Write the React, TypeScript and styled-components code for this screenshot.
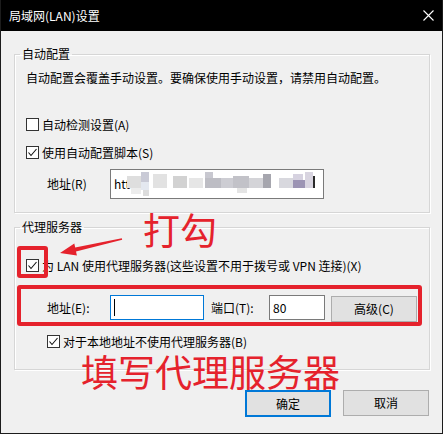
import styled, { createGlobalStyle } from "styled-components";

const GlobalStyle = createGlobalStyle`
  html, body {
    margin: 0;
    padding: 0;
    background: #f0f0f0;
  }
  body {
    font-family: "Noto Sans CJK SC", "Noto Sans", sans-serif;
    font-size: 12px;
    line-height: 16px;
    color: #000;
  }
`;

const RED = "#e5222c";

const mosaic = [
  { x: 0, y: 4, w: 14, h: 12, c: "#dedede" },
  { x: 4, y: 16, w: 10, h: 6, c: "#ececec" },
  { x: 14, y: 0, w: 8, h: 10, c: "#c9cad6" },
  { x: 14, y: 10, w: 8, h: 8, c: "#e4e8f0" },
  { x: 16, y: 18, w: 6, h: 6, c: "#dcdcdc" },
  { x: 26, y: 2, w: 14, h: 14, c: "#e2e2e2" },
  { x: 46, y: 4, w: 14, h: 12, c: "#d2d2d2" },
  { x: 62, y: 6, w: 14, h: 10, c: "#e6e6e6" },
  { x: 78, y: 0, w: 8, h: 6, c: "#c8c8d0" },
  { x: 78, y: 6, w: 16, h: 10, c: "#bdbdc4" },
  { x: 94, y: 6, w: 12, h: 10, c: "#cdcdd3" },
  { x: 106, y: 4, w: 16, h: 12, c: "#c2c2c8" },
  { x: 110, y: 16, w: 10, h: 5, c: "#e4e4e4" },
  { x: 122, y: 6, w: 14, h: 10, c: "#d4d4d8" },
  { x: 136, y: 2, w: 8, h: 14, c: "#a6a6ae" },
  { x: 152, y: 6, w: 14, h: 10, c: "#d8d8de" },
  { x: 166, y: 2, w: 10, h: 6, c: "#d6d2e0" },
  { x: 166, y: 8, w: 12, h: 8, c: "#9c94b4" },
  { x: 178, y: 0, w: 8, h: 16, c: "#d8d4e0" },
  { x: 186, y: 4, w: 2, h: 12, c: "#2a2a2a" },
];

const App = () => {
  return (
    <>
      <GlobalStyle />
      <Window>
        <TitleBar>
          <TitleText>局域网(LAN)设置</TitleText>
          <Close width="11" height="11" viewBox="0 0 11 11">
            <path d="M0.5 0.5 L10.5 10.5 M10.5 0.5 L0.5 10.5" stroke="#fff" strokeWidth="1.1" />
          </Close>
        </TitleBar>
        <Body>
          <Group $pb={13}>
            <Legend>自动配置</Legend>
            <GroupInner>
              <Desc>自动配置会覆盖手动设置。要确保使用手动设置，请禁用自动配置。</Desc>
              <CheckRow $top={32}>
                <Box />
                <span>自动检测设置(A)</span>
              </CheckRow>
              <CheckRow $top={15}>
                <Box>
                  <Tick />
                </Box>
                <span>使用自动配置脚本(S)</span>
              </CheckRow>
              <FieldRow $top={10}>
                <FieldLabel $w={63}>地址(R)</FieldLabel>
                <Input $w={214} $h={30}>
                  <span>htt</span>
                  <svg width="190" height="24" viewBox="0 0 190 24">
                    {mosaic.map((m, i) => (
                      <rect key={i} x={m.x} y={m.y} width={m.w} height={m.h} fill={m.c} />
                    ))}
                  </svg>
                </Input>
              </FieldRow>
            </GroupInner>
          </Group>

          <Group $pb={21} $mt={6}>
            <Legend>代理服务器</Legend>
            <GroupInner>
              <CheckRow $top={24}>
                <Box>
                  <Tick />
                </Box>
                <span>为 LAN 使用代理服务器(这些设置不用于拨号或 VPN 连接)(X)</span>
              </CheckRow>
              <ProxyRow>
                <FieldLabel $w={63}>地址(E):</FieldLabel>
                <Input $w={94} $h={25} $focus>
                  <Caret />
                </Input>
                <FieldLabel $w={58} $ml={7}>端口(T):</FieldLabel>
                <Input $w={56} $h={25}>
                  80
                </Input>
                <Button $w={86} $ml={6} $mt={1}>
                  高级(C)
                </Button>
              </ProxyRow>
              <CheckRow $top={15} $indent={21}>
                <Box>
                  <Tick />
                </Box>
                <span>对于本地地址不使用代理服务器(B)</span>
              </CheckRow>
            </GroupInner>
          </Group>

          <Footer>
            <Button $w={86} $primary>
              确定
            </Button>
            <Button $w={86}>取消</Button>
          </Footer>
        </Body>

        <MarkBox $x={17} $y={246} $w={31} $h={32} />
        <MarkBox $x={17} $y={285} $w={405} $h={41} />
        <Arrow width="70" height="26" viewBox="56 233 70 26">
          <polygon
            points="60,253 74.3,243.6 75.2,247.5 121.8,238.2 122.2,239.8 76.0,251.5 76.9,255.4"
            fill={RED}
          />
        </Arrow>
        <Note $x={143} $y={209}>打勾</Note>
        <Note $x={81} $y={351}>填写代理服务器</Note>
      </Window>
    </>
  );
};

const Tick = () => (
  <svg width="11" height="11" viewBox="0 0 11 11">
    <polyline points="1.5,5.5 4,8.5 9.5,2" fill="none" stroke="#111" strokeWidth="1.1" />
  </svg>
);

export default App;

const Window = styled.div`
  position: relative;
  width: 443px;
  height: 434px;
  box-sizing: border-box;
  background: #f0f0f0;
  border: 1px solid #1c1c1c;
  border-top: none;
  display: flex;
  flex-direction: column;
  overflow: hidden;
`;

const TitleBar = styled.div`
  height: 31px;
  flex-shrink: 0;
  background: #000;
  display: flex;
  align-items: center;
  justify-content: space-between;
  padding: 0 9px 0 8px;
  margin: 0 -1px;
  padding-left: 9px;
`;

const TitleText = styled.div`
  color: #fff;
  font-size: 12px;
  line-height: 16px;
`;

const Close = styled.svg`
  display: block;
`;

const Body = styled.div`
  display: flex;
  flex-direction: column;
  padding: 15px 12px 0 13px;
`;

const Group = styled.fieldset<{ $pb: number; $mt?: number }>`
  margin: ${({ $mt }) => $mt ?? 0}px 0 0 0;
  padding: 0 0 ${({ $pb }) => $pb}px 0;
  min-width: 0;
  border: 1px solid #d6d6d6;
  box-shadow: inset 1px 1px 0 #fff, 1px 1px 0 #fff;
`;

const Legend = styled.legend`
  margin-left: 5px;
  padding: 0 2px;
  line-height: 16px;
`;

const GroupInner = styled.div`
  display: flex;
  flex-direction: column;
  padding-left: 11px;
`;

const Desc = styled.div`
  margin-top: 8px;
  white-space: nowrap;
`;

const CheckRow = styled.div<{ $top: number; $indent?: number }>`
  display: flex;
  align-items: center;
  gap: 3px;
  height: 13px;
  margin-top: ${({ $top }) => $top}px;
  padding-left: ${({ $indent }) => $indent ?? 0}px;
  white-space: nowrap;
`;

const Box = styled.span`
  width: 13px;
  height: 13px;
  box-sizing: border-box;
  border: 1px solid #333;
  background: #fff;
  display: flex;
  align-items: center;
  justify-content: center;
  flex-shrink: 0;

  svg {
    display: block;
  }
`;

const FieldRow = styled.div<{ $top: number }>`
  display: flex;
  align-items: center;
  margin-top: ${({ $top }) => $top}px;
  padding-left: 21px;
`;

const ProxyRow = styled.div`
  display: flex;
  align-items: flex-start;
  margin-top: 23px;
  padding-left: 21px;
  height: 25px;
`;

const FieldLabel = styled.div<{ $w: number; $ml?: number }>`
  width: ${({ $w }) => $w}px;
  margin-left: ${({ $ml }) => $ml ?? 0}px;
  height: 25px;
  display: flex;
  align-items: center;
  flex-shrink: 0;
  white-space: nowrap;
`;

const Input = styled.div<{ $w: number; $h: number; $focus?: boolean }>`
  width: ${({ $w }) => $w}px;
  height: ${({ $h }) => $h}px;
  box-sizing: border-box;
  border: 1px solid ${({ $focus }) => ($focus ? "#0078d7" : "#7a7a7a")};
  background: #fff;
  display: flex;
  align-items: center;
  padding-left: 3px;
  flex-shrink: 0;
  overflow: hidden;
  white-space: nowrap;

  svg {
    display: block;
    flex-shrink: 0;
    margin-left: -3px;
  }
`;

const Caret = styled.span`
  width: 1px;
  height: 17px;
  background: #000;
`;

const Button = styled.div<{ $w: number; $ml?: number; $mt?: number; $primary?: boolean }>`
  width: ${({ $w }) => $w}px;
  height: ${({ $primary }) => ($primary ? 27 : 26)}px;
  margin-left: ${({ $ml }) => $ml ?? 0}px;
  margin-top: ${({ $mt }) => $mt ?? 0}px;
  box-sizing: border-box;
  background: #e1e1e1;
  border: ${({ $primary }) => ($primary ? "2px solid #0078d7" : "1px solid #adadad")};
  display: flex;
  align-items: center;
  justify-content: center;
  flex-shrink: 0;
`;

const Footer = styled.div`
  display: flex;
  justify-content: flex-end;
  align-items: flex-start;
  gap: 12px;
  margin-top: 20px;
  padding-right: 1px;
`;

const MarkBox = styled.div<{ $x: number; $y: number; $w: number; $h: number }>`
  position: absolute;
  left: ${({ $x }) => $x - 1}px;
  top: ${({ $y }) => $y}px;
  width: ${({ $w }) => $w}px;
  height: ${({ $h }) => $h}px;
  box-sizing: border-box;
  border: 4px solid ${RED};
  border-radius: 3px;
  pointer-events: none;
`;

const Arrow = styled.svg`
  position: absolute;
  left: 55px;
  top: 233px;
  pointer-events: none;
`;

const Note = styled.div<{ $x: number; $y: number }>`
  position: absolute;
  left: ${({ $x }) => $x - 1}px;
  top: ${({ $y }) => $y}px;
  color: ${RED};
  font-size: 37px;
  line-height: 40px;
  white-space: nowrap;
  pointer-events: none;
`;
